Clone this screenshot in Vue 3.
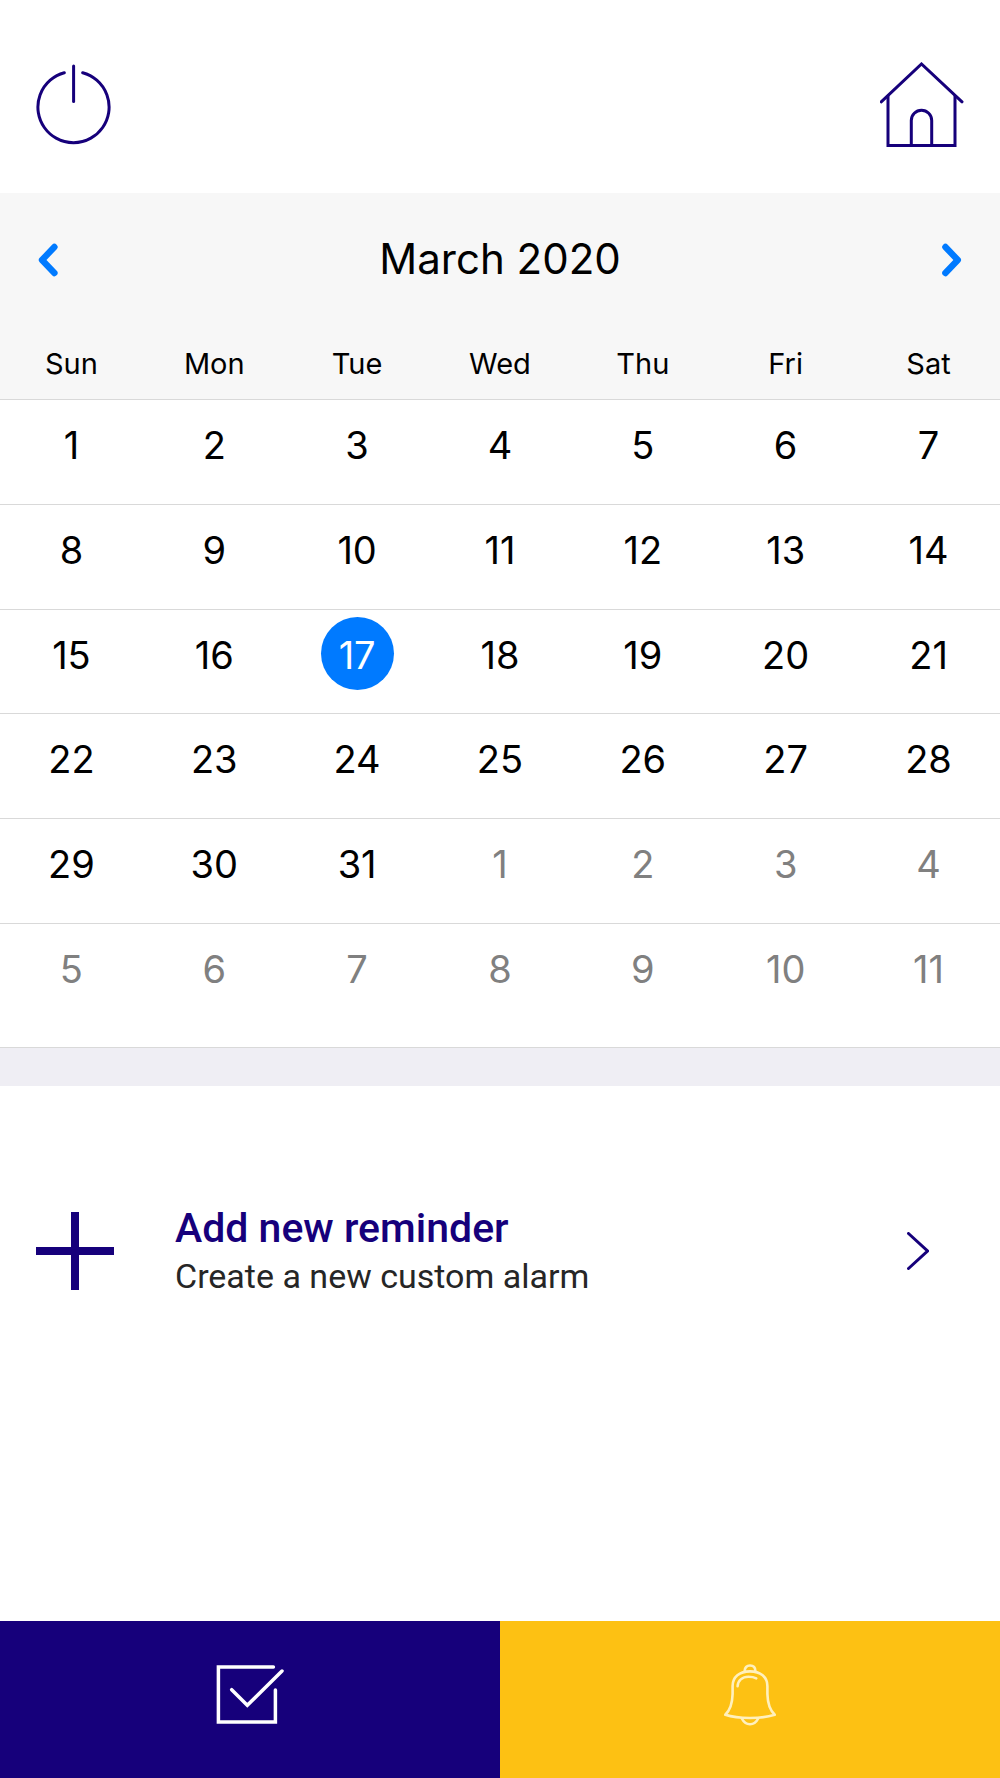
<script setup>
import { computed, ref } from 'vue'

const weekdays = ['Sun', 'Mon', 'Tue', 'Wed', 'Thu', 'Fri', 'Sat']
const months = [
  'January', 'February', 'March', 'April', 'May', 'June', 'July',
  'August', 'September', 'October', 'November', 'December',
]

const year = ref(2020)
const month = ref(2)
const selected = ref(new Date(2020, 2, 17).getTime())

const title = computed(() => `${months[month.value]} ${year.value}`)

// always six weeks, starting on the sunday before the 1st
const weeks = computed(() => {
  const offset = new Date(year.value, month.value, 1).getDay()
  const rows = []
  for (let w = 0; w < 6; w++) {
    const row = []
    for (let d = 0; d < 7; d++) {
      const date = new Date(year.value, month.value, 1 - offset + w * 7 + d)
      row.push({
        time: date.getTime(),
        day: date.getDate(),
        outside: date.getMonth() !== month.value,
      })
    }
    rows.push(row)
  }
  return rows
})

function move(step) {
  const next = new Date(year.value, month.value + step, 1)
  year.value = next.getFullYear()
  month.value = next.getMonth()
}
</script>

<template>
  <div class="screen">
    <header class="topbar">
      <button class="icon-btn" type="button" aria-label="Log out">
        <svg width="75" height="82" viewBox="0 0 75 82" fill="none" stroke="currentColor" stroke-width="3" stroke-linecap="round">
          <path d="M28.3 8.7A35.6 35.6 0 1 0 46.7 8.7" />
          <path d="M37.6 2v35.5" />
        </svg>
      </button>
      <button class="icon-btn" type="button" aria-label="Home">
        <svg width="84" height="86" viewBox="0 0 84 86" fill="none" stroke="currentColor" stroke-width="3" stroke-linecap="round">
          <path d="M1.2 39.8 41.5 2 82 39.8" />
          <path d="M8 34v49.5h67V34" />
          <path d="M31.3 83V58.5a10.2 10.2 0 0 1 20.4 0V83" />
        </svg>
      </button>
    </header>

    <section class="calendar">
      <div class="month">
        <button class="icon-btn arrow" type="button" aria-label="Previous month" @click="move(-1)">
          <svg width="20" height="34" viewBox="0 0 20 34" fill="none" stroke="currentColor" stroke-width="6.4" stroke-linecap="round" stroke-linejoin="round">
            <path d="M16.4 4 4 17l12.4 13" />
          </svg>
        </button>
        <h1>{{ title }}</h1>
        <button class="icon-btn arrow" type="button" aria-label="Next month" @click="move(1)">
          <svg width="20" height="34" viewBox="0 0 20 34" fill="none" stroke="currentColor" stroke-width="6.4" stroke-linecap="round" stroke-linejoin="round">
            <path d="M3.4 4l12.4 13L3.4 30" />
          </svg>
        </button>
      </div>

      <table>
        <thead>
          <tr>
            <th v-for="name in weekdays" :key="name" scope="col">{{ name }}</th>
          </tr>
        </thead>
        <tbody>
          <tr v-for="(week, i) in weeks" :key="i">
            <td v-for="cell in week" :key="cell.time">
              <button
                class="day"
                type="button"
                :class="{ outside: cell.outside, selected: cell.time === selected }"
                @click="selected = cell.time"
              >{{ cell.day }}</button>
            </td>
          </tr>
        </tbody>
      </table>
    </section>

    <div class="divider"></div>

    <main class="reminders">
      <button class="reminder" type="button">
        <svg width="78" height="78" viewBox="0 0 78 78" fill="none" stroke="currentColor" stroke-width="8">
          <path d="M0 39h78M39 0v78" />
        </svg>
        <span class="label">
          <strong>Add new reminder</strong>
          <span>Create a new custom alarm</span>
        </span>
        <svg width="22" height="38" viewBox="0 0 22 38" fill="none" stroke="currentColor" stroke-width="3" stroke-linecap="round">
          <path d="M1.5 1.5 20.5 19 1.5 36.5" />
        </svg>
      </button>
    </main>

    <nav class="tabs">
      <button class="tab tasks" type="button" aria-label="Tasks">
        <svg width="68" height="62" viewBox="0 0 68 62" fill="none" stroke="currentColor" stroke-width="3.5" stroke-linecap="round">
          <path d="M57.4 3H2.4v55h57V26" />
          <path d="M15.7 25.7 31.3 41.3 66 7" />
        </svg>
      </button>
      <button class="tab alarms" type="button" aria-label="Alarms">
        <svg width="52" height="62" viewBox="0 0 52 62" fill="none" stroke="currentColor" stroke-width="2.6" stroke-linecap="round" stroke-linejoin="round">
          <path d="M20.6 7.2C20.6 3.5 22.8 1.5 26 1.5s5.4 2 5.4 5.7" />
          <path d="M1.3 50.8C6.2 46 8.4 38.5 8.6 30v-8C8.6 13 15.5 7.4 26 7.4S43.4 13 43.4 22v8c.2 8.5 2.4 16 7.3 20.8C43.5 53.2 35 54 26 54S8.5 53.2 1.3 50.8Z" />
          <path d="M17.8 54.5c2 3.9 4.8 5.8 8.2 5.8s6.200-1.900 8.200-5.800" />
          <path d="M13.6 22.3c.2-5.8 4.6-9.5 10.9-9.5 3 0 5.500.4 7.800 1.500" />
        </svg>
      </button>
    </nav>
  </div>
</template>

<style>
body {
  margin: 0;
  background: #fff;
}
</style>

<style scoped>
.screen {
  display: flex;
  flex-direction: column;
  min-height: 100vh;
  color: #000;
  font-family: Inter, "Liberation Sans", sans-serif;
}

button {
  margin: 0;
  padding: 0;
  border: 0;
  background: none;
  color: inherit;
  font: inherit;
  cursor: pointer;
}

svg {
  display: block;
  flex: none;
}

.topbar {
  display: flex;
  align-items: center;
  justify-content: space-between;
  box-sizing: border-box;
  height: 193px;
  padding: 16px 36px 0;
  color: #16007b;
}

.calendar {
  padding-bottom: 19px;
  border-bottom: 1px solid #d9d9d9;
}

.month {
  display: flex;
  align-items: center;
  justify-content: space-between;
  height: 134px;
  padding: 0 38px;
  background: #f7f7f7;
}

.month h1 {
  margin: 0;
  padding-bottom: 2px;
  font-size: 42px;
  font-weight: 400;
  line-height: 48px;
}

.arrow {
  color: #007aff;
}

table {
  width: 100%;
  height: 701px;
  table-layout: fixed;
  border-spacing: 0;
}

th {
  height: 72px;
  padding: 0;
  background: #f7f7f7;
  font-size: 29px;
  font-weight: 400;
}

td {
  padding: 7px 0 0;
  border-top: 1px solid #d9d9d9;
  text-align: center;
  vertical-align: top;
}

.day {
  width: 73px;
  height: 73px;
  padding-top: 3px;
  border-radius: 50%;
  font-size: 38px;
  line-height: 70px;
}

.outside {
  color: #808080;
}

.selected {
  background: #007aff;
  color: #fff;
}

.divider {
  height: 38px;
  background: #efeef4;
}

.reminders {
  flex: 1;
  padding: 117px 0;
}

.reminder {
  display: flex;
  align-items: center;
  width: 100%;
  padding: 0 71px 0 36px;
  color: #16007b;
  font-family: Roboto, "Liberation Sans", sans-serif;
  text-align: left;
}

.label {
  display: flex;
  flex: 1;
  flex-direction: column;
  padding-left: 61px;
}

.label strong {
  font-size: 41px;
  font-weight: 500;
  line-height: 51px;
}

.label span {
  color: #262626;
  font-size: 34px;
  line-height: 45px;
}

.tabs {
  display: flex;
  height: 157px;
}

.tab {
  display: flex;
  flex: 1;
  align-items: center;
  justify-content: center;
  padding-bottom: 10px;
}

.tasks {
  background: #16007b;
  color: #fff;
}

.alarms {
  background: #fdc113;
  color: #fff0bd;
}
</style>
